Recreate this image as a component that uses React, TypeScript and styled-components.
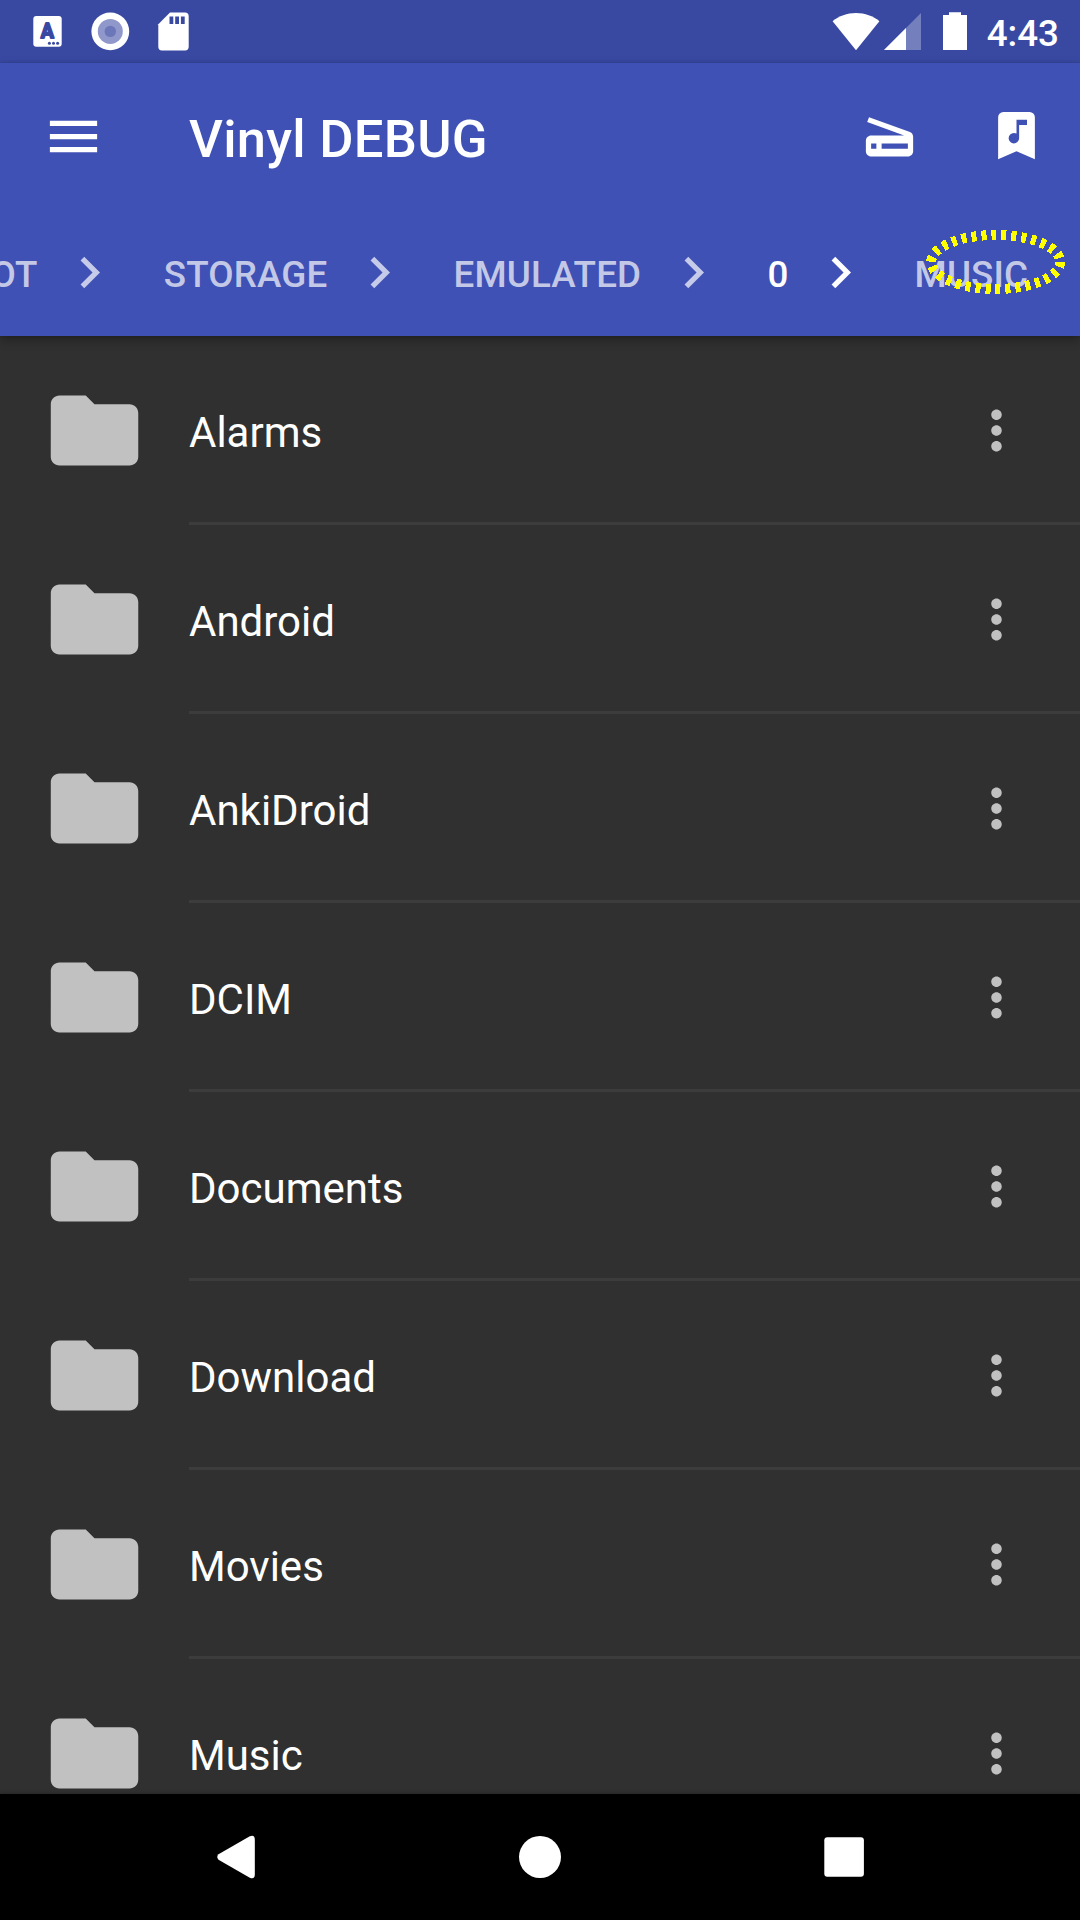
import React from "react";
import styled, { createGlobalStyle } from "styled-components";

const GlobalStyle = createGlobalStyle`
  *, *::before, *::after { box-sizing: border-box; }
  body { margin: 0; background: #303030; }
`;

const Screen = styled.div`
  display: flex;
  flex-direction: column;
  width: 1080px;
  height: 1920px;
  overflow: hidden;
  background: #303030;
  color: #fff;
  font-family: Roboto, "Noto Sans", sans-serif;
`;

const StatusBar = styled.div`
  display: flex;
  align-items: center;
  justify-content: space-between;
  flex: none;
  height: 63px;
  padding: 0 21px 0 24px;
  background: #3949a2;
`;

const StatusGroup = styled.div`
  display: flex;
  align-items: center;
`;

const StatusIcon = styled.svg<{ $width: number }>`
  display: block;
  flex: none;
  width: ${({ $width }) => $width}px;
  height: 63px;
`;

const Clock = styled.span`
  padding: 4px 0 0 19px;
  font-size: 36.75px;
  font-weight: 500;
  line-height: 60px;
`;

const AppBar = styled.header`
  position: relative;
  z-index: 1;
  flex: none;
  background: #3f51b5;
  box-shadow: 0 4px 10px rgba(0, 0, 0, 0.3), 0 0 3px rgba(0, 0, 0, 0.15);
`;

const Toolbar = styled.div`
  display: flex;
  align-items: center;
  height: 147px;
  padding-left: 42px;
`;

const Icon = styled.svg<{ $size?: number }>`
  display: block;
  flex: none;
  width: ${({ $size = 63 }) => $size}px;
  height: ${({ $size = 63 }) => $size}px;
  fill: currentColor;
`;

const IconButton = styled.button<{ $width?: number }>`
  display: flex;
  align-items: center;
  justify-content: center;
  flex: none;
  width: ${({ $width = 63 }) => $width}px;
  padding: 0;
  border: 0;
  background: none;
  color: inherit;
`;

const Title = styled.h1`
  flex: 1;
  margin: 0;
  padding: 5px 0 0 84px;
  font-size: 52.5px;
  font-weight: 500;
  letter-spacing: 0.27px;
  line-height: 62px;
`;

const Actions = styled.div`
  display: flex;
  padding-bottom: 2px;
`;

const Breadcrumbs = styled.nav`
  display: flex;
  align-items: center;
  justify-content: flex-end;
  height: 126px;
  padding: 0 51.8px 2px 0;
  overflow: hidden;
`;

const Crumb = styled.div<{ $active: boolean }>`
  display: flex;
  align-items: center;
  flex: none;
  padding-left: 42.6px;
  color: ${({ $active }) => ($active ? "#fff" : "rgba(255, 255, 255, 0.7)")};
`;

const CrumbLabel = styled.span`
  display: block;
  padding-top: 6px;
  font-size: 36.75px;
  font-weight: 500;
  letter-spacing: 0.15px;
  line-height: 44px;
  text-transform: uppercase;
`;

const CrumbArrow = styled.span`
  display: flex;
  margin-left: 20.6px;
`;

const Marked = styled.span`
  position: relative;
  display: block;
`;

const Marker = styled.svg`
  position: absolute;
  left: 6.5px;
  top: -23px;
  width: 150px;
  height: 76px;
  fill: none;
  stroke: #ff0;
  stroke-width: 10;
  stroke-dasharray: 5 5;
`;

const FileList = styled.main`
  flex: 1;
  min-height: 0;
  overflow: hidden;
`;

const FileRow = styled.div`
  display: flex;
  align-items: center;
  height: 189px;
  padding-left: 42px;
  color: #c1c1c1;
`;

const FileBody = styled.div`
  display: flex;
  align-items: center;
  flex: 1;
  height: 100%;
  margin-left: 42px;
  padding: 3px 52px 0 0;
  border-bottom: 3px solid #3c3c3c;
`;

const FileName = styled.span`
  flex: 1;
  padding-top: 4px;
  color: #fff;
  font-size: 42px;
  line-height: 50px;
`;

const NavBar = styled.footer`
  position: relative;
  z-index: 1;
  display: flex;
  align-items: center;
  justify-content: center;
  gap: 200px;
  flex: none;
  height: 126px;
  background: #000;
  box-shadow: 0 0 4px rgba(0, 0, 0, 0.3);
`;

const crumbs = ["Root", "storage", "emulated", "0", "Music"];
const activeCrumb = 3;
const folders = ["Alarms", "Android", "AnkiDroid", "DCIM", "Documents", "Download", "Movies", "Music"];

function Notifications() {
  return (
    <StatusGroup>
      <StatusIcon $width={47} viewBox="24 0 47 63">
        <rect x="33.3" y="16" width="28.4" height="30.8" rx="3" fill="#fff" />
        <text
          x="47.3"
          y="37.8"
          textAnchor="middle"
          fontFamily="Roboto, sans-serif"
          fontWeight="700"
          fontSize="19.5"
          fill="#3949a2"
          stroke="#3949a2"
          strokeWidth="1.8"
          strokeLinejoin="round"
        >
          A
        </text>
        {[49.4, 53.5, 57.6].map((x) => (
          <circle key={x} cx={x} cy="43.2" r="1.5" fill="#3949a2" />
        ))}
      </StatusIcon>
      <StatusIcon $width={79} viewBox="71 0 79 63">
        <circle cx="110.3" cy="31.4" r="18.9" fill="#fff" />
        <circle cx="110.3" cy="31.4" r="12.5" fill="#9098cb" />
        <circle cx="110.3" cy="31.4" r="5.7" fill="#6c77b9" />
      </StatusIcon>
      <StatusIcon $width={47} viewBox="150 0 47 63">
        <path
          fill="#fff"
          d="M170 12.5H185a3.7 3.7 0 0 1 3.7 3.7V46.8a3.7 3.7 0 0 1-3.7 3.7H162a3.7 3.7 0 0 1-3.7-3.7V24.2z"
        />
        <path fill="#3949a2" d="M169.5 16.4h3.8V24h-3.8zM175.2 16.4h3.8V24h-3.8zM180.9 16.4h3.8V24h-3.8z" />
      </StatusIcon>
    </StatusGroup>
  );
}

function SystemStatus() {
  return (
    <StatusGroup>
      <StatusIcon $width={48} viewBox="832 0 48 63">
        <path fill="#fff" d="M856 50.2L832.6 21.2C839 16 847 13 856 13s17 3 23.4 8.2z" />
      </StatusIcon>
      <StatusIcon $width={50} viewBox="880 0 50 63">
        <path fill="#fff" fillOpacity="0.3" d="M884 50L921 13V50z" />
        <path fill="#fff" d="M884 50L906 28V50z" />
      </StatusIcon>
      <StatusIcon $width={38} viewBox="930 0 38 63">
        <path fill="#fff" d="M949 12.2h12V15h6v35h-24V15h6z" />
      </StatusIcon>
      <Clock>4:43</Clock>
    </StatusGroup>
  );
}

export default function App() {
  return (
    <Screen>
      <GlobalStyle />
      <StatusBar>
        <Notifications />
        <SystemStatus />
      </StatusBar>
      <AppBar>
        <Toolbar>
          <IconButton aria-label="Menu">
            <Icon viewBox="0 0 24 24">
              <path d="M3 18h18v-2H3v2zm0-5h18v-2H3v2zm0-7v2h18V6H3z" />
            </Icon>
          </IconButton>
          <Title>Vinyl DEBUG</Title>
          <Actions>
            <IconButton $width={127} aria-label="Scan">
              <Icon viewBox="0 0 24 24">
                <path d="M19.8 10.7L4.2 5l-.7 1.9L17.6 12H5c-1.1 0-2 .9-2 2v4c0 1.1.9 2 2 2h14c1.1 0 2-.9 2-2v-5.5c0-.8-.5-1.6-1.2-1.8zM7 17H5v-2h2v2zm12 0H9v-2h10v2z" />
              </Icon>
            </IconButton>
            <IconButton $width={127} aria-label="Go to music folder">
              <Icon viewBox="0 0 24 24">
                <path d="M17 3a2 2 0 0 1 2 2v16l-7-3-7 3V5a2 2 0 0 1 2-2h10m-6 12a2 2 0 0 0 2-2V8h3V6h-4v5.27c-.3-.17-.64-.27-1-.27a2 2 0 0 0-2 2 2 2 0 0 0 2 2z" />
              </Icon>
            </IconButton>
          </Actions>
        </Toolbar>
        <Breadcrumbs>
          {crumbs.map((name, i) => {
            const last = i === crumbs.length - 1;
            return (
              <Crumb key={name} $active={i === activeCrumb}>
                <Marked>
                  <CrumbLabel>{name}</CrumbLabel>
                  {last && (
                    <Marker viewBox="0 0 150 76" shapeRendering="crispEdges">
                      <ellipse cx="74.7" cy="38" rx="64.5" ry="27" />
                    </Marker>
                  )}
                </Marked>
                {!last && (
                  <CrumbArrow>
                    <Icon viewBox="0 0 24 24">
                      <path d="M10 6L8.59 7.41 13.17 12l-4.58 4.59L10 18l6-6z" />
                    </Icon>
                  </CrumbArrow>
                )}
              </Crumb>
            );
          })}
        </Breadcrumbs>
      </AppBar>
      <FileList>
        {folders.map((name) => (
          <FileRow key={name}>
            <Icon $size={105} viewBox="0 0 24 24">
              <path d="M10 4H4c-1.1 0-1.99.9-1.99 2L2 18c0 1.1.9 2 2 2h16c1.1 0 2-.9 2-2V8c0-1.1-.9-2-2-2h-8l-2-2z" />
            </Icon>
            <FileBody>
              <FileName>{name}</FileName>
              <IconButton aria-label="More">
                <Icon viewBox="0 0 24 24">
                  <path d="M12 8c1.1 0 2-.9 2-2s-.9-2-2-2-2 .9-2 2 .9 2 2 2zm0 2c-1.1 0-2 .9-2 2s.9 2 2 2 2-.9 2-2-.9-2-2-2zm0 6c-1.1 0-2 .9-2 2s.9 2 2 2 2-.9 2-2-.9-2-2-2z" />
                </Icon>
              </IconButton>
            </FileBody>
          </FileRow>
        ))}
      </FileList>
      <NavBar>
        <IconButton $width={104} aria-label="Back">
          <Icon $size={104} viewBox="184 1805 104 104">
            <path d="M218.5 1854.3L249.8 1836.2Q254.8 1834.3 254.8 1839.5V1874.5Q254.8 1879.7 249.8 1877.8L218.5 1859.7Q216 1857 218.5 1854.3z" />
          </Icon>
        </IconButton>
        <IconButton $width={104} aria-label="Home">
          <Icon $size={104} viewBox="0 0 104 104">
            <circle cx="52" cy="52" r="21" />
          </Icon>
        </IconButton>
        <IconButton $width={104} aria-label="Recent apps">
          <Icon $size={104} viewBox="0 0 104 104">
            <rect x="32.3" y="32.2" width="39.6" height="39.6" rx="3" />
          </Icon>
        </IconButton>
      </NavBar>
    </Screen>
  );
}
